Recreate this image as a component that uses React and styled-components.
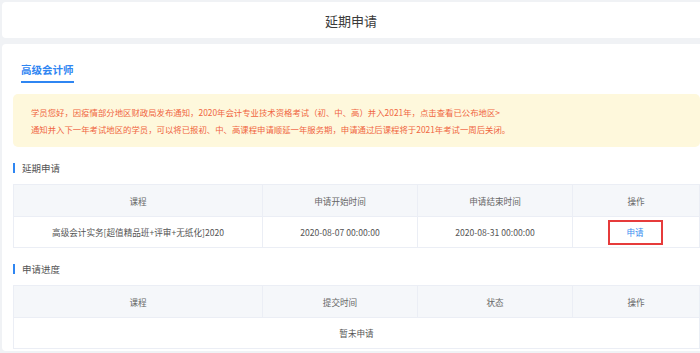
import React from "react";
import styled, { createGlobalStyle } from "styled-components";

const GlobalStyle = createGlobalStyle`
  html, body {
    margin: 0;
    padding: 0;
    background: #f0f2f5;
    font-family: "Noto Sans CJK SC", "Noto Sans", sans-serif;
    overflow: hidden;
  }
`;

const Page = styled.div`
  padding: 2px 0 0 2px;
  width: 698px;
`;

const HeaderCard = styled.div`
  height: 36px;
  background: #fff;
  border-radius: 4px 0 0 4px;
  display: flex;
  align-items: center;
  justify-content: center;
  font-size: 13px;
  color: #3a3a3a;
`;

const MainCard = styled.div`
  margin-top: 6px;
  background: #fff;
  border-radius: 4px 0 0 4px;
  padding: 0 0 2px 11px;
`;

const TabBar = styled.div`
  display: flex;
  padding: 18px 0 0 8px;
  margin-bottom: 11px;
`;

const Tab = styled.div`
  font-size: 10.5px;
  font-weight: bold;
  line-height: 15px;
  color: #2f86f2;
  padding-bottom: 4px;
  border-bottom: 2px solid #2f86f2;
`;

const Notice = styled.div`
  background: #fef8dc;
  border-radius: 5px;
  padding: 10px 18px 9px;
  font-size: 8.4px;
  line-height: 17px;
  color: #f0653f;
`;

const SectionTitle = styled.div`
  display: flex;
  align-items: center;
  gap: 7px;
  margin-top: 14px;
  margin-bottom: 9px;
  height: 14px;
  font-size: 9.5px;
  color: #555;
  &::before {
    content: "";
    width: 2px;
    height: 10px;
    background: #2f86f2;
  }
`;

const Table = styled.div`
  display: grid;
  grid-template-columns: 249px 155px 155px 1fr;
  border: 1px solid #ebeef5;
  border-right: none;
  border-bottom: none;
`;

const Cell = styled.div`
  display: flex;
  align-items: center;
  justify-content: center;
  height: ${(p) => (p.$head ? "31px" : "30px")};
  background: ${(p) => (p.$head ? "#f5f7fa" : "#fff")};
  color: ${(p) => (p.$head ? "#666" : "#555")};
  font-size: 8.6px;
  border-right: 1px solid #ebeef5;
  border-bottom: 1px solid #ebeef5;
  grid-column: ${(p) => (p.$span ? "1 / -1" : "auto")};
`;

const ApplyButton = styled.div`
  width: 51px;
  height: 21px;
  border: 2px solid #e63b3b;
  display: flex;
  align-items: center;
  justify-content: center;
  color: #3a8ef0;
  font-size: 8.6px;
  margin-left: -2px;
`;

const headers1 = ["课程", "申请开始时间", "申请结束时间", "操作"];
const headers2 = ["课程", "提交时间", "状态", "操作"];

export default function App() {
  return (
    <>
      <GlobalStyle />
      <Page>
        <HeaderCard>延期申请</HeaderCard>
        <MainCard>
          <TabBar>
            <Tab>高级会计师</Tab>
          </TabBar>
          <Notice>
            <div>学员您好，因疫情部分地区财政局发布通知，2020年会计专业技术资格考试（初、中、高）并入2021年，点击查看已公布地区&gt;</div>
            <div>通知并入下一年考试地区的学员，可以将已报初、中、高课程申请顺延一年服务期，申请通过后课程将于2021年考试一周后关闭。</div>
          </Notice>
          <SectionTitle>延期申请</SectionTitle>
          <Table>
            {headers1.map((h) => (
              <Cell $head key={h}>{h}</Cell>
            ))}
            <Cell>高级会计实务[超值精品班+评审+无纸化]2020</Cell>
            <Cell>2020-08-07 00:00:00</Cell>
            <Cell>2020-08-31 00:00:00</Cell>
            <Cell>
              <ApplyButton>申请</ApplyButton>
            </Cell>
          </Table>
          <SectionTitle>申请进度</SectionTitle>
          <Table>
            {headers2.map((h) => (
              <Cell $head key={h}>{h}</Cell>
            ))}
            <Cell $span>暂未申请</Cell>
          </Table>
        </MainCard>
      </Page>
    </>
  );
}
